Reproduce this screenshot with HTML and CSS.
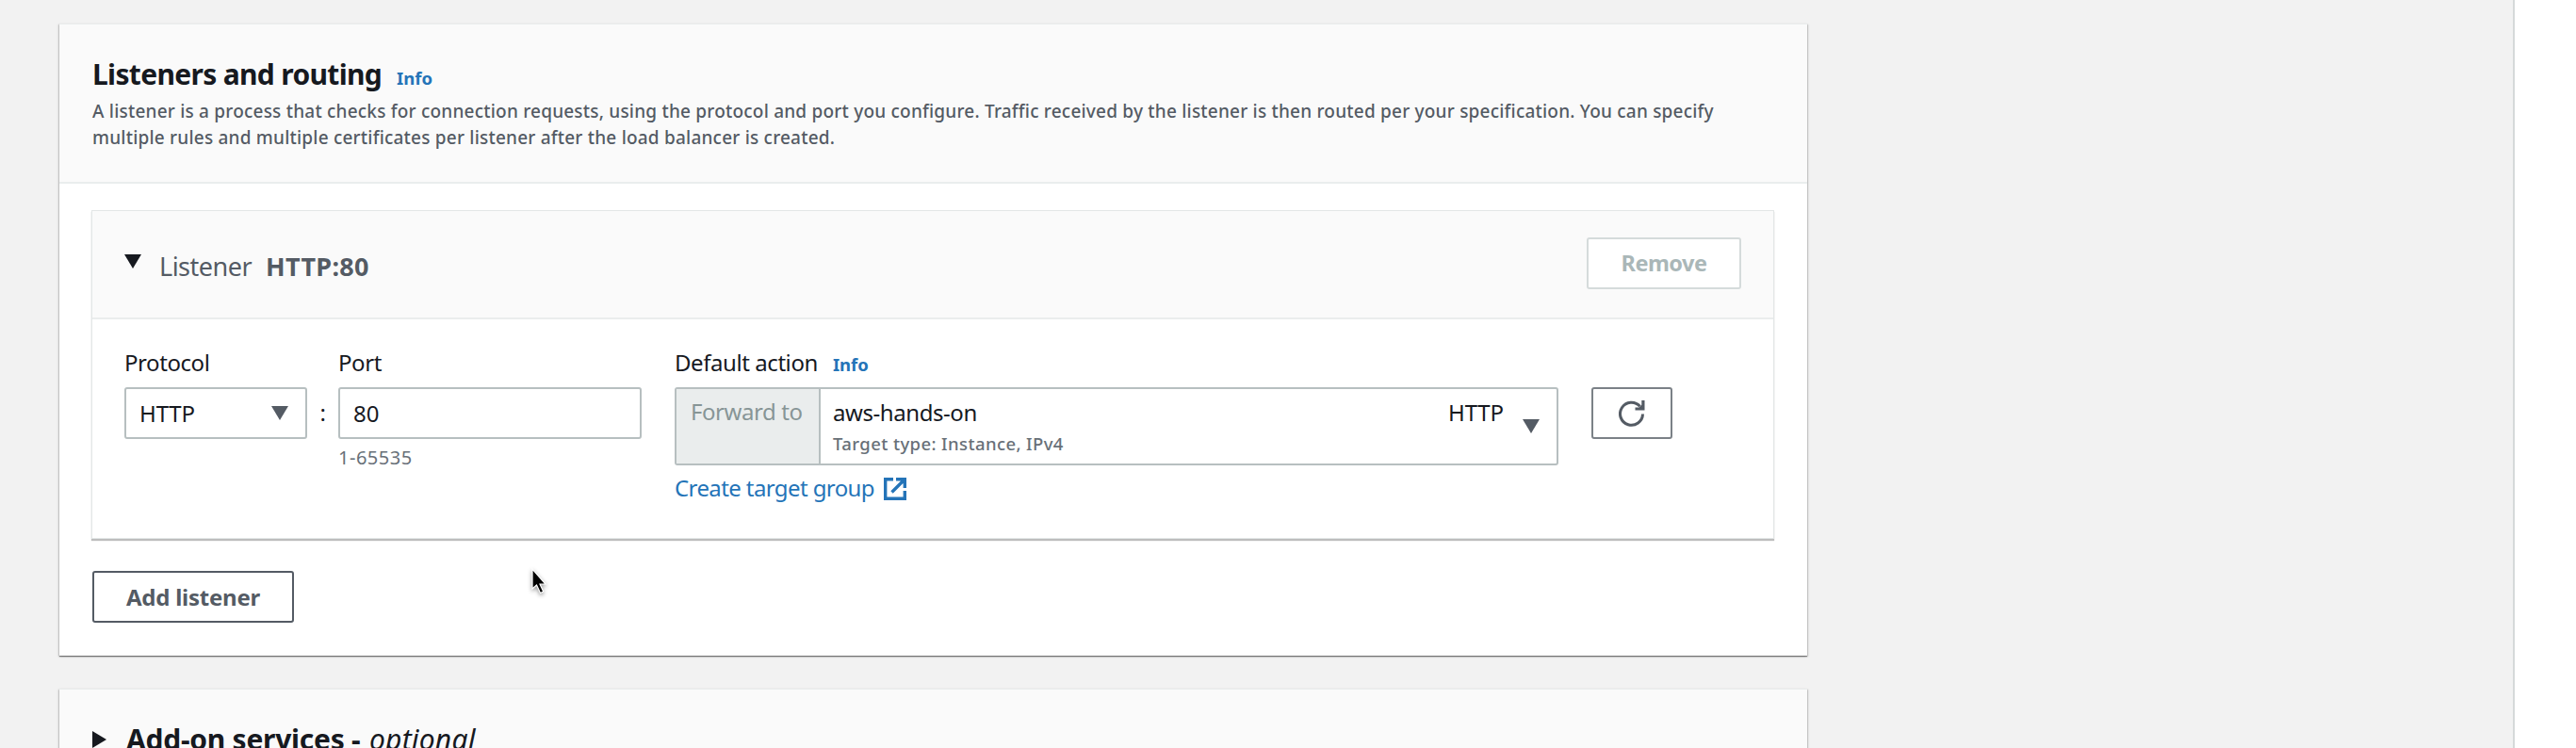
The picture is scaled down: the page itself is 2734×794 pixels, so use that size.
FILE: index.html
```
<!DOCTYPE html>
<html lang="en">
<head>
<meta charset="utf-8">
<title>Listeners and routing</title>
<link rel="stylesheet" href="styles.css">
</head>
<body>
<main class="page">
  <section class="panel">
    <header class="panel-header">
      <div class="title-row"><h2 class="title">Listeners and routing</h2><a class="info">Info</a></div>
      <p class="desc">A listener is a process that checks for connection requests, using the protocol and port you configure. Traffic received by the listener is then routed per your specification. You can specify<br>multiple rules and multiple certificates per listener after the load balancer is created.</p>
    </header>
    <div class="panel-body">
      <div class="card">
        <div class="card-header">
          <svg class="caret" width="18" height="15" viewBox="0 0 18 15"><path d="M0 0h18L9 15z"/></svg>
          <span class="listener">Listener</span>
          <strong class="listener-id">HTTP:80</strong>
          <button class="btn btn-disabled">Remove</button>
        </div>
        <div class="form">
          <div class="field protocol">
            <label class="label">Protocol</label>
            <div class="control select"><span class="http">HTTP</span><svg width="18" height="15" viewBox="0 0 18 15"><path d="M0 0h18L9 15z"/></svg></div>
          </div>
          <div class="colon">:</div>
          <div class="field port">
            <label class="label">Port</label>
            <div class="control input"><span class="port-value">80</span></div>
            <div class="hint">1-65535</div>
          </div>
          <div class="field action">
            <label class="label"><span>Default action</span><a class="info">Info</a></label>
            <div class="forward">
              <div class="forward-prefix">Forward to</div>
              <div class="target">
                <div class="target-main"><div class="target-name">aws-hands-on</div><div class="target-type">Target type: Instance, IPv4</div></div>
                <span class="http">HTTP</span>
                <svg class="target-caret" width="18" height="15" viewBox="0 0 18 15"><path d="M0 0h18L9 15z"/></svg>
              </div>
            </div>
            <a class="create"><span>Create target group</span><svg width="24" height="24" viewBox="0 0 24 24"><path class="frame" d="M10 1.700H1.700v20.600h20.600V14"/><path class="frame" d="M8.500 15.500L20 4"/><path class="arrow" d="M13 0h11v11h-3.400V6.500L17.500 3.400H13z"/></svg></a>
          </div>
          <button class="refresh"><svg width="28" height="28" viewBox="0 0 28 28"><path class="arc" d="M25.500 14.500A12 12 0 1 1 22.500 6.300"/><path class="head" d="M27.500 0v10.500H17.500V7.500H21.500L24.300 4.800V0z"/></svg></button>
        </div>
      </div>
      <button class="btn add">Add listener</button>
    </div>
  </section>
  <section class="panel addons">
    <svg class="caret-right" width="15" height="18" viewBox="0 0 15 18"><path d="M0 0v18L15 9z"/></svg>
    <h2 class="title addon-title">Add-on services - <em class="optional">optional</em></h2>
  </section>
</main>
<svg class="cursor" width="22" height="32" viewBox="0 0 22 32"><path d="M3 2v21l4.500-4 4 8.500 3.200-1.500-3.700-8h6z"/></svg>
</body>
</html>
```
FILE: styles.css
```
* { box-sizing: border-box; }
body {
  margin: 0;
  width: 2734px;
  height: 794px;
  overflow: hidden;
  background: #fff;
  color: #16191f;
  font-family: "Noto Sans", "Open Sans", sans-serif;
  font-size: 24px;
  line-height: 32px;
  letter-spacing: -.43px;
}
h2, p { margin: 0; }
button { font-family: inherit; }
svg { display: block; flex: none; }
.page {
  width: 2669px;
  height: 794px;
  overflow: hidden;
  padding: 25px 0 0 63px;
  background: #f2f2f2;
  border-right: 2px solid #d5d9d9;
}
.panel {
  width: 1855px;
  background: #fff;
  border-top: 1px solid #eaeded;
  box-shadow: 0 1px 1px rgba(0, 0, 0, .4), 1px 1px 2px rgba(0, 0, 0, .17), -1px 1px 2px rgba(0, 0, 0, .17);
}
.panel-header {
  height: 169px;
  padding: 35px 35px 0;
  background: #fafafa;
  border-bottom: 2px solid #eaeded;
}
.title-row { display: flex; align-items: baseline; gap: 16px; }
.title { font-size: 30px; line-height: 36px; font-weight: 700; letter-spacing: -.67px; }
.info { color: #2474b8; font-size: 18.5px; line-height: 24px; font-weight: 700; letter-spacing: 0; }
.desc { margin-top: 8px; color: #545b64; font-size: 19px; line-height: 27.5px; font-weight: 500; letter-spacing: .21px; white-space: nowrap; }
.panel-body { padding: 28px 34px 35px; }
.card {
  width: 1786px;
  height: 349px;
  border: 1px solid #e3e7e7;
  box-shadow: 0 2px 1px rgba(0, 0, 0, .26);
}
.card-header {
  display: flex;
  height: 115px;
  padding: 0 34px;
  align-items: center;
  background: #fafafa;
  border-bottom: 2px solid #eaeded;
}
.caret { margin-bottom: 7px; fill: #16191f; }
.listener, .listener-id { margin-top: 5px; font-size: 27px; line-height: 36px; color: #545b64; }
.listener { margin-left: 19px; letter-spacing: -.5px; }
.listener-id { margin-left: 15px; letter-spacing: .3px; }
.btn {
  height: 55px;
  padding: 0;
  border: 2px solid #545b64;
  border-radius: 3px;
  background: #fff;
  color: #545b64;
  font-size: 24px;
  line-height: 32px;
  font-weight: 700;
  letter-spacing: -.25px;
}
.btn-disabled { width: 164px; margin-left: auto; padding-bottom: 1px; border-color: #d5dbdb; color: #aab7b8; margin-bottom: 3px; font-size: 23.5px; letter-spacing: -.5px; }
.form { display: flex; padding: 30px 34px 0; }
.field { display: flex; flex-direction: column; }
.label { display: flex; align-items: baseline; gap: 16px; height: 32px; margin-bottom: 10px; }
.protocol { width: 194px; }
.port { width: 322px; }
.action { width: 938px; margin-left: 35px; }
.control {
  display: flex;
  height: 55px;
  padding: 0 18px 0 14px;
  align-items: center;
  border: 2px solid #b7bfc0;
  border-radius: 3px;
}
.select { justify-content: space-between; }
.http { letter-spacing: -.12px; }
.port-value { padding-top: 1px; letter-spacing: 0; }
.select svg, .target-caret { fill: #545b64; }
.colon { width: 33px; margin-top: 53px; text-align: center; }
.hint { margin-top: 6px; color: #687078; font-size: 20px; line-height: 28px; letter-spacing: .5px; }
.forward { display: flex; height: 83px; border: 2px solid #b7bfc0; border-radius: 3px; }
.forward-prefix { width: 153px; padding: 8px 0 0 15px; background: #eaeded; color: #879596; border-right: 2px solid #b7bfc0; }
.target { display: flex; flex: 1; padding: 9px 18px 0 13px; }
.target-main { flex: 1; }
.target-type { margin-top: 3px; color: #687078; font-size: 18.5px; line-height: 28px; font-weight: 500; letter-spacing: .4px; }
.target-caret { margin: 23px 0 0 20px; }
.create { display: flex; gap: 10px; margin-top: 8px; color: #2474b8; letter-spacing: -.6px; }
.create svg { margin-top: 5px; fill: #2474b8; }
.frame { fill: none; stroke: #2474b8; stroke-width: 3.4; }
.refresh {
  display: grid;
  place-items: center;
  width: 86px;
  height: 55px;
  margin: 42px 0 0 35px;
  padding: 0;
  border: 2px solid #7b8187;
  border-radius: 3px;
  background: #fff;
}
.arc { fill: none; stroke: #545b64; stroke-width: 3; }
.head { fill: #545b64; }
.add { display: block; width: 214px; margin: 34px 0 0 1px; }
.addons { display: flex; height: 120px; margin-top: 35px; padding: 35px 35px 0; background: #fafafa; }
.caret-right { margin-top: 9px; margin-right: 21px; fill: #16191f; }
.addon-title { letter-spacing: -.25px; }
.optional { margin-left: 2px; font-weight: 400; letter-spacing: .2px; }
.cursor { position: absolute; left: 562px; top: 602px; fill: #000; stroke: #fff; stroke-width: 1.2; filter: drop-shadow(0 2px 2px rgba(0, 0, 0, .4)); }
```
